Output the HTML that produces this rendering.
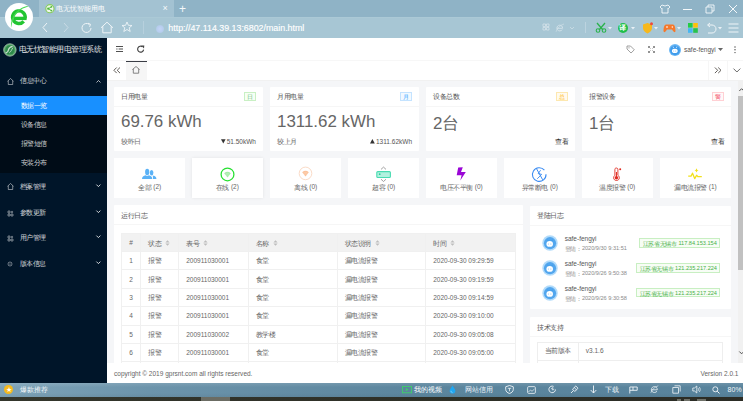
<!DOCTYPE html>
<html><head><meta charset="utf-8">
<style>
*{margin:0;padding:0;box-sizing:border-box}
html,body{width:743px;height:401px;overflow:hidden;background:#fff}
body{font-family:"Liberation Sans",sans-serif;position:relative;color:#666}
.a{position:absolute}
.t{position:absolute;white-space:nowrap;line-height:1}
svg{position:absolute;overflow:visible}
.srt{position:relative;display:inline-block;vertical-align:middle;margin-left:3.4px;top:0.4px}
/* browser chrome */
#tabstrip{left:0;top:0;width:743px;height:17px;background:#8fb3c6}
#tab{left:39px;top:0;width:135px;height:17px;background:#a3c2d2}
#addr{left:0;top:17px;width:743px;height:21px;background:#a7c6d4;border-top:1px solid #abc9d6}
/* sidebar */
#side{left:0;top:38px;width:107px;height:345px;background:#001529}
#sub{left:0;top:95.5px;width:107px;height:77.3px;background:#000c17}
#active{left:0;top:95.5px;width:107px;height:19px;background:#1890ff}
.mt{color:rgba(255,255,255,.8);font-size:6.5px}
/* header */
#header{left:107px;top:38px;width:636px;height:23.3px;background:#fff;border-bottom:1px solid #f7f7f7}
#tabs{left:107px;top:61px;width:636px;height:19.5px;background:#fff;border-bottom:1px solid #f1f1f1}
#content{left:107px;top:80.5px;width:636px;height:283px;background:#f5f6f8}
.card{position:absolute;background:#fff;border-radius:1px}
.ch{position:absolute;left:0;top:0;right:0;height:19.5px;border-bottom:1px solid #f6f6f6}
.ctitle{font-size:6.5px;color:#555}
.badge{position:absolute;font-size:6px;line-height:8.6px;height:9.4px;width:12.6px;border:1px solid;text-align:center}
.big{font-size:16.9px;color:#666}
.tri{position:relative;display:inline-block;vertical-align:baseline;margin-right:1px}
.small{font-size:6.5px;color:#666}
.sc{position:absolute;top:158.3px;height:40px;width:71px;background:#fff}
.sct{position:absolute;left:0;right:0;top:184px;text-align:center;font-size:6.5px;color:#666}
/* table */
table{border-collapse:collapse;position:absolute;left:120.7px;top:232.6px;width:395px;font-size:6.5px;color:#666}
td,th{border:1px solid #f0f0f0;height:18.4px;padding:0 0 0 7px;text-align:left;font-weight:normal;white-space:nowrap}
th{background:#f2f2f2;padding-top:1.6px;height:18.4px}
#footer{left:107px;top:363px;width:636px;height:20px;background:#fff}
#status{left:0;top:383px;width:743px;height:13.5px;background:linear-gradient(180deg,rgba(255,255,255,.12) 0,rgba(255,255,255,0) 30%,rgba(0,0,0,0) 70%,rgba(0,0,0,.05) 100%),linear-gradient(90deg,#7ea3b8 0%,#6c94ab 20%,#5c869e 55%,#58839c 100%)}
#bottom{left:0;top:396.5px;width:743px;height:5px;background:linear-gradient(90deg,#34362c,#2f3128 50%,#2b2c25)}
</style></head><body>

<!-- ===== Browser chrome ===== -->
<div class="a" id="tabstrip"></div>
<div class="a" id="tab"></div>
<div class="a" id="addr"></div>
<!-- logo circle -->
<div class="a" style="left:5px;top:3px;width:28px;height:28px;border-radius:50%;background:#fff"></div>
<svg style="left:0;top:0" width="40" height="40" viewBox="0 0 40 40">
  <path d="M13.2 18.4 H26.6" stroke="#22c532" stroke-width="3.4"></path>
  <path d="M25.1 18.3 A6.3 6.3 0 1 0 23.7 21.3" fill="none" stroke="#22c532" stroke-width="3.4"></path>
  <path d="M12.2 23.5 C12.6 18.5 14.5 14.5 17.8 11.4" fill="none" stroke="#fff" stroke-width="0.5" opacity="0.7"></path>
  <path d="M11 27.8 C10.8 21 12.6 14.8 17.5 10.8 C20.3 8.5 23.5 6.9 27.3 6 C27.9 5.9 28.1 6.4 27.6 6.8 C23.8 7.8 20.5 9.5 17.8 12.2 C14.5 15.5 12.2 21 11 27.8 Z" fill="#3fd84a"></path>
</svg>
<!-- tab favicon -->
<svg style="left:44.5px;top:4.2px" width="10" height="10"><circle cx="4.9" cy="4.7" r="4.1" fill="#eef7ea" stroke="#86cc5c" stroke-width="1.1"></circle><path d="M6.3 2.9 L3.4 4.7 L6.3 6.5" fill="none" stroke="#4fb83a" stroke-width="0.9"></path><circle cx="3.2" cy="4.7" r="1.1" fill="#4fb83a"></circle><circle cx="6.4" cy="2.8" r="0.9" fill="#4fb83a"></circle><circle cx="6.4" cy="6.6" r="0.9" fill="#4fb83a"></circle></svg>
<div class="t" style="left:56.3px;top:5px;font-size:7px;color:#fff"><i style="font-style: normal;"><i style="letter-spacing: 0px; font-style: normal;">电无忧智能用</i>电</i></div>
<div class="t" style="left:162.5px;top:4px;font-size:9px;color:#f4f8fa">×</div>
<div class="t" style="left:179px;top:2.5px;font-size:12px;color:#f4f8fa">+</div>
<!-- nav icons -->
<svg style="left:41px;top:22px" width="8" height="11"><path d="M6 1 L2 5.5 L6 10" fill="none" stroke="#eef4f7" stroke-width="1"></path></svg>
<svg style="left:62px;top:22px" width="8" height="11"><path d="M2 1 L6 5.5 L2 10" fill="none" stroke="#c9dbe5" stroke-width="1"></path></svg>
<svg style="left:81px;top:21.5px" width="12" height="12"><path d="M10 6 A4.5 4.5 0 1 1 8.5 2.6" fill="none" stroke="#eef4f7" stroke-width="1"></path><path d="M7 1.2 L9.5 2.3 L8.6 4.8" fill="none" stroke="#eef4f7" stroke-width="1"></path></svg>
<svg style="left:100px;top:21px" width="14" height="13"><path d="M1 6.8 L7 1.2 L13 6.8 M2.8 5.3 V11.8 H11.2 V5.3" fill="none" stroke="#eef4f7" stroke-width="1"></path></svg>
<svg style="left:121px;top:21px" width="12" height="12"><path d="M6 1 L7.4 4.3 L11 4.5 L8.2 6.8 L9.2 10.5 L6 8.5 L2.8 10.5 L3.8 6.8 L1 4.5 L4.6 4.3 Z" fill="none" stroke="#eef4f7" stroke-width="0.9"></path></svg>
<div class="a" style="left:143px;top:21px;width:1px;height:13px;background:#b7d0dd"></div>
<div class="a" style="left:155.5px;top:24.8px;width:8px;height:8px;border-radius:50%;background:radial-gradient(circle,#c3d4f6 0%,#b7cdee 55%,rgba(170,200,225,0) 100%)"></div>
<div class="t" style="left:168.3px;top:23.8px;font-size:8.85px;color:#fff;-webkit-text-stroke:0.15px #fff">http://47.114.39.13:6802/main.html</div>
<!-- top right window controls -->
<svg style="left:659px;top:4px" width="12" height="10"><path d="M3 1 L1 3 L2.5 4.5 L3 4 V9 H9 V4 L9.5 4.5 L11 3 L9 1 Q6 3 3 1 Z" fill="none" stroke="#f4f8fa" stroke-width="0.9"></path></svg>
<div class="a" style="left:683px;top:8.5px;width:9px;height:1px;background:#f4f8fa"></div>
<svg style="left:705px;top:4px" width="10" height="10"><path d="M1 3 H7 V9 H1 Z M3 3 V1 H9 V7 H7" fill="none" stroke="#f4f8fa" stroke-width="0.9"></path></svg>
<svg style="left:728px;top:4px" width="10" height="10"><path d="M1 1 L9 9 M9 1 L1 9" stroke="#f4f8fa" stroke-width="1"></path></svg>
<!-- address bar right icons -->
<svg style="left:542px;top:23px" width="8" height="8"><path d="M1 1h2.5v2.5H1zM4.5 1H7v2.5H4.5zM1 4.5h2.5V7H1zM4.5 4.5H7V7H4.5z" fill="none" stroke="#d4e2ea" stroke-width="0.8"></path></svg>
<svg style="left:554.5px;top:22.5px" width="10" height="10"><path d="M2.2 5.3 H7.6 C7.6 3.3 6.3 2.2 4.8 2.2 C3 2.2 1.9 3.6 1.9 5.1 C1.9 6.8 3.1 7.9 4.8 7.9 C5.9 7.9 6.8 7.4 7.3 6.6" fill="none" stroke="#d4e2ea" stroke-width="0.9"></path><path d="M1 8.8 C2.3 5 5 2.3 9 1" fill="none" stroke="#d4e2ea" stroke-width="0.6"></path></svg>
<svg style="left:569px;top:26px" width="6" height="4"><path d="M1 1 L3 3 L5 1" fill="none" stroke="#d4e2ea" stroke-width="0.7"></path></svg>
<div class="a" style="left:585px;top:22px;width:1px;height:11px;background:#bcd3df"></div>
<svg style="left:594.5px;top:22px" width="12" height="11"><path d="M2 1 L8 8 M10 1 L4 8" stroke="#2bb24c" stroke-width="1.3"></path><circle cx="3" cy="8.5" r="1.8" fill="none" stroke="#2bb24c" stroke-width="1.1"></circle><circle cx="9" cy="8.5" r="1.8" fill="none" stroke="#2bb24c" stroke-width="1.1"></circle></svg>
<svg style="left:608px;top:26.5px" width="4" height="3"><path d="M0 0 H4 L2 2.5 Z" fill="#e8f0f5"></path></svg>
<div class="a" style="left:617.5px;top:22.5px;width:10px;height:10px;border-radius:50%;background:#1fbf4a"></div>
<div class="t" style="left:619px;top:24.2px;font-size:7px;color:#fff;font-weight:bold"><i style="font-style: normal;">译</i></div>
<svg style="left:631px;top:26.5px" width="4" height="3"><path d="M0 0 H4 L2 2.5 Z" fill="#e8f0f5"></path></svg>
<svg style="left:641.5px;top:22px" width="11" height="12"><path d="M5.5 1 L10 2.5 V6 C10 8.5 8 10.5 5.5 11.5 C3 10.5 1 8.5 1 6 V2.5 Z" fill="#f7b81c"></path><circle cx="9.5" cy="1.8" r="1.5" fill="#ef4a3c"></circle></svg>
<svg style="left:654px;top:26.5px" width="4" height="3"><path d="M0 0 H4 L2 2.5 Z" fill="#e8f0f5"></path></svg>
<svg style="left:663px;top:22.5px" width="13" height="10"><path d="M3 1.5 H10 C12 1.5 12.5 6 12.5 8 C12.5 9.5 11 9.5 10 8 L9 6.5 H4 L3 8 C2 9.5 0.5 9.5 0.5 8 C0.5 6 1 1.5 3 1.5 Z" fill="#f6782a"></path><path d="M3 4 H5 M4 3 V5" stroke="#fff" stroke-width="0.6"></path><circle cx="9.3" cy="4" r="0.7" fill="#fff"></circle></svg>
<svg style="left:677px;top:26.5px" width="4" height="3"><path d="M0 0 H4 L2 2.5 Z" fill="#e8f0f5"></path></svg>
<svg style="left:687.5px;top:22.5px" width="10" height="10"><rect x="0" y="0" width="4.6" height="4.6" fill="#22cc44"></rect><rect x="5.2" y="0" width="4.6" height="4.6" fill="#ffc107"></rect><rect x="0" y="5.2" width="4.6" height="4.6" fill="#45b6f2"></rect><rect x="5.2" y="5.2" width="4.6" height="4.6" fill="#27c24c"></rect></svg>
<svg style="left:705px;top:22px" width="12" height="12"><path d="M3 3 H7 C9.5 3 11 5 11 7 C11 9 9.5 11 7 11 H3" fill="none" stroke="#eef4f7" stroke-width="1"></path><path d="M5 1 L2.5 3 L5 5" fill="none" stroke="#eef4f7" stroke-width="1"></path></svg>
<svg style="left:718px;top:26.5px" width="4" height="3"><path d="M0 0 H4 L2 2.5 Z" fill="#e8f0f5"></path></svg>
<svg style="left:728px;top:22.5px" width="11" height="10"><path d="M0.5 1 H10.5 M0.5 5 H10.5 M0.5 9 H10.5" stroke="#eef4f7" stroke-width="1"></path></svg>

<!-- ===== Sidebar ===== -->
<div class="a" id="side"></div>
<div class="a" id="sub"></div>
<div class="a" id="active"></div>
<svg style="left:0;top:40px" width="20" height="20"><circle cx="9.9" cy="9.95" r="6.2" fill="#58a86c" stroke="#a9c7b2" stroke-width="0.8"></circle><circle cx="9.9" cy="9.95" r="4.6" fill="#2e8b4a"></circle><path d="M12.6 6.3 C10.5 6.8 8.8 8.2 8.6 9.5 C8.4 11 7.2 12.6 5.6 13.2" fill="none" stroke="#c9ddcf" stroke-width="1.3"></path><path d="M12.8 7.8 C11.7 9.5 11.2 11.5 9.3 12.8" fill="none" stroke="#d6e6da" stroke-width="0.8"></path></svg>
<div class="t" style="left:18.5px;top:46.2px;font-size:7.55px;color:#e4e6e8"><i style="font-style: normal;"><i style="letter-spacing: -0.45px; font-style: normal;">电无忧智能用电管理系</i>统</i></div>

<svg style="left:6.5px;top:78px" width="7" height="7"><path d="M0.5 3.3 L3.5 0.5 L6.5 3.3 M1.3 2.7 V6.5 H5.7 V2.7" fill="none" stroke="rgba(255,255,255,.7)" stroke-width="0.7"></path></svg>
<div class="t mt" style="left:20px;top:78.3px"><i style="font-style: normal;"><i style="letter-spacing: -0.5px; font-style: normal;">信息中</i>心</i></div>
<svg style="left:95.5px;top:80px" width="5" height="3"><path d="M0.5 2.5 L2.5 0.5 L4.5 2.5" fill="none" stroke="rgba(255,255,255,.85)" stroke-width="0.8"></path></svg>

<div class="t mt" style="left:20.5px;top:103px;color:#fff"><i style="font-style: normal;"><i style="letter-spacing: -0.5px; font-style: normal;">数据一</i>览</i></div>
<div class="t mt" style="left:20.5px;top:122.3px"><i style="font-style: normal;"><i style="letter-spacing: -0.5px; font-style: normal;">设备信</i>息</i></div>
<div class="t mt" style="left:20.5px;top:140.6px"><i style="font-style: normal;"><i style="letter-spacing: -0.5px; font-style: normal;">报警短</i>信</i></div>
<div class="t mt" style="left:20.5px;top:159.6px"><i style="font-style: normal;"><i style="letter-spacing: -0.5px; font-style: normal;">安装分</i>布</i></div>

<svg style="left:6.5px;top:183.2px" width="7" height="7"><path d="M0.5 3.3 L3.5 0.5 L6.5 3.3 M1.3 2.7 V6.5 H5.7 V2.7" fill="none" stroke="rgba(255,255,255,.7)" stroke-width="0.7"></path></svg>
<div class="t mt" style="left:19.5px;top:183.5px"><i style="font-style: normal;"><i style="letter-spacing: -0.5px; font-style: normal;">档案管</i>理</i></div>
<svg style="left:95.8px;top:184.3px" width="5" height="3.5"><path d="M0.4 0.6 L2.4 2.6 L4.4 0.6" fill="none" stroke="rgba(255,255,255,.9)" stroke-width="0.9"></path></svg>

<svg style="left:6.5px;top:209.6px" width="7" height="7"><path d="M1 1h2v2H1zM1 4h2v2H1zM4 4h2v2H4z M3.9 2 h2.2 M5 0.9 v2.2" fill="none" stroke="rgba(255,255,255,.72)" stroke-width="0.6"></path></svg>
<div class="t mt" style="left:19.5px;top:209.7px"><i style="font-style: normal;"><i style="letter-spacing: -0.5px; font-style: normal;">参数更</i>新</i></div>
<svg style="left:95.8px;top:209.6px" width="5" height="3.5"><path d="M0.4 0.6 L2.4 2.6 L4.4 0.6" fill="none" stroke="rgba(255,255,255,.9)" stroke-width="0.9"></path></svg>

<svg style="left:6.5px;top:235.1px" width="7" height="7"><path d="M1 1h2v2H1zM1 4h2v2H1zM4 4h2v2H4z M3.9 2 h2.2 M5 0.9 v2.2" fill="none" stroke="rgba(255,255,255,.72)" stroke-width="0.6"></path></svg>
<div class="t mt" style="left:19.5px;top:235.2px"><i style="font-style: normal;"><i style="letter-spacing: -0.5px; font-style: normal;">用户管</i>理</i></div>
<svg style="left:95.8px;top:235.2px" width="5" height="3.5"><path d="M0.4 0.6 L2.4 2.6 L4.4 0.6" fill="none" stroke="rgba(255,255,255,.9)" stroke-width="0.9"></path></svg>

<svg style="left:7px;top:260.8px" width="6" height="6"><circle cx="3" cy="3" r="2" fill="none" stroke="rgba(255,255,255,.7)" stroke-width="0.6"></circle><circle cx="3" cy="3" r="0.6" fill="rgba(255,255,255,.7)"></circle></svg>
<div class="t mt" style="left:19.5px;top:260.7px"><i style="font-style: normal;"><i style="letter-spacing: -0.5px; font-style: normal;">版本信</i>息</i></div>
<svg style="left:95.8px;top:260.8px" width="5" height="3.5"><path d="M0.4 0.6 L2.4 2.6 L4.4 0.6" fill="none" stroke="rgba(255,255,255,.9)" stroke-width="0.9"></path></svg>

<!-- ===== Header ===== -->
<div class="a" id="header"></div>
<svg style="left:116px;top:46px" width="8" height="7"><path d="M0 0.5 H7 M2.6 3 H7 M0 5.5 H7" stroke="#505050" stroke-width="1"></path><rect x="0.3" y="2.4" width="1.2" height="1.2" fill="#666"></rect></svg>
<svg style="left:137px;top:45.4px" width="8" height="8"><path d="M6.6 4.6 A3 3 0 1 1 5.5 1.8" fill="none" stroke="#444" stroke-width="1.15"></path><path d="M4.2 0.6 L7.3 0.4 L7 3.4Z" fill="#444"></path></svg>
<svg style="left:625.5px;top:45.3px" width="9" height="8"><path d="M1 1 H4.5 L8.3 4.8 L5 8 L1 4 Z" fill="none" stroke="#888" stroke-width="0.8"></path><circle cx="3" cy="2.8" r="0.6" fill="#888"></circle></svg>
<svg style="left:647.5px;top:45.5px" width="7" height="7"><path d="M0.5 0.5 L2.5 2.5 M0.5 0.5 H2 M0.5 0.5 V2 M6.5 0.5 L4.5 2.5 M6.5 0.5 H5 M6.5 0.5 V2 M0.5 6.5 L2.5 4.5 M0.5 6.5 H2 M0.5 6.5 V5 M6.5 6.5 L4.5 4.5 M6.5 6.5 H5 M6.5 6.5 V5" stroke="#777" stroke-width="0.8"></path></svg>
<svg style="left:667px;top:41.8px" width="16" height="16" viewBox="-8 -8 16 16"><circle r="6" fill="#6db8f4"></circle><circle cy="0.3" r="4.9" fill="#3f9cec"></circle><path d="M-1.9 -3.4 L-1.3 -1.9 M1.9 -3.4 L1.3 -1.9" stroke="#fff" stroke-width="0.6"></path><ellipse cx="-0.2" cy="0.9" rx="2.9" ry="2.1" fill="#fff"></ellipse><circle cx="-1.2" cy="1" r="0.45" fill="#3f9cec"></circle><circle cx="0.8" cy="1" r="0.45" fill="#3f9cec"></circle></svg>
<div class="t" style="left:684px;top:46.9px;font-size:6.5px;color:#555">safe-fengyi</div>
<svg style="left:717.5px;top:48.3px" width="5" height="3"><path d="M0 0 H5 L2.5 3Z" fill="#666"></path></svg>
<svg style="left:733.6px;top:46px" width="2" height="8"><circle cx="1" cy="1" r="0.7" fill="#444"></circle><circle cx="1" cy="3.8" r="0.7" fill="#444"></circle><circle cx="1" cy="6.6" r="0.7" fill="#444"></circle></svg>

<!-- ===== Tabs ===== -->
<div class="a" id="tabs"></div>
<div class="a" style="left:126px;top:61px;width:21px;height:19px;background:#f6f6f6"></div>
<div class="a" style="left:126px;top:61px;width:21px;height:1px;background:#3a3d45"></div>
<svg style="left:112.5px;top:66.5px" width="8" height="7"><path d="M3.7 0.5 L0.9 3.3 L3.7 6.1 M7 0.5 L4.2 3.3 L7 6.1" fill="none" stroke="#5a5550" stroke-width="0.95"></path></svg>
<svg style="left:132.4px;top:65.6px" width="8.5" height="8"><path d="M0.4 3.6 L4 0.5 L7.6 3.6 M1.3 2.9 V7.2 H6.7 V2.9" fill="none" stroke="#707070" stroke-width="0.85" stroke-linejoin="round"></path></svg>
<div class="a" style="left:708px;top:61px;width:1px;height:19px;background:#f6f6f6"></div>
<div class="a" style="left:727px;top:61px;width:1px;height:19px;background:#f6f6f6"></div>
<svg style="left:713.8px;top:66.8px" width="8" height="7"><path d="M0.9 0.5 L3.7 3.3 L0.9 6.1 M4.2 0.5 L7 3.3 L4.2 6.1" fill="none" stroke="#5a5550" stroke-width="0.95"></path></svg>
<svg style="left:732.6px;top:67.6px" width="8" height="5"><path d="M0.5 0.6 L3.9 4 L7.3 0.6" fill="none" stroke="#5a5a5a" stroke-width="0.9"></path></svg>

<!-- ===== Content ===== -->
<div class="a" id="content"></div>

<!-- Row 1 cards -->
<div class="card" style="left:114px;top:87.3px;width:149px;height:63.5px">
  <div class="ch"></div>
  <div class="t ctitle" style="left:7px;top:6.9px"><i style="font-style: normal;"><i style="letter-spacing: -0.5px; font-style: normal;">日用电</i>量</i></div>
  <div class="badge" style="right:6.8px;top:4.3px;color:#5fb878;border-color:#c9f0c4;background:#f6fff4"><i style="font-style: normal;">日</i></div>
  <div class="t big" style="left:7px;top:27.1px">69.76 kWh</div>
  <div class="t small" style="left:7px;top:51.8px"><i style="font-style: normal;"><i style="letter-spacing: -0.5px; font-style: normal;">较昨</i>日</i></div>
  <div class="t small" style="right:7px;top:51.3px;color:#555"><svg class="tri" width="4.6" height="4.6" viewBox="0 0 4.6 4.6"><path d="M0 0.2 H4.6 L2.3 4.6Z" fill="#333"></path></svg>51.50kWh</div>
</div>
<div class="card" style="left:270px;top:87.3px;width:149px;height:63.5px">
  <div class="ch"></div>
  <div class="t ctitle" style="left:7px;top:6.9px"><i style="font-style: normal;"><i style="letter-spacing: -0.5px; font-style: normal;">月用电</i>量</i></div>
  <div class="badge" style="right:6.8px;top:4.3px;color:#1e9fff;border-color:#c4e3ff;background:#f2f9ff"><i style="font-style: normal;">月</i></div>
  <div class="t big" style="left:7px;top:27.1px">1311.62 kWh</div>
  <div class="t small" style="left:7px;top:51.8px"><i style="font-style: normal;"><i style="letter-spacing: -0.5px; font-style: normal;">较上</i>月</i></div>
  <div class="t small" style="right:7px;top:51.3px;color:#555"><svg class="tri" width="4.8" height="4.6" viewBox="0 0 4.8 4.6"><path d="M0 4.6 H4.8 L2.4 0Z" fill="#333"></path></svg>1311.62kWh</div>
</div>
<div class="card" style="left:426px;top:87.3px;width:149px;height:63.5px">
  <div class="ch"></div>
  <div class="t ctitle" style="left:7px;top:6.9px"><i style="font-style: normal;"><i style="letter-spacing: -0.5px; font-style: normal;">设备总</i>数</i></div>
  <div class="badge" style="right:6.8px;top:4.3px;color:#ffb800;border-color:#fde8b0;background:#fffaef"><i style="font-style: normal;">总</i></div>
  <div class="t big" style="left:7px;top:28.4px">2<i style="font-style: normal;">台</i></div>
  <div class="t small" style="right:6.5px;top:51.5px;color:#333"><i style="font-style: normal;"><i style="letter-spacing: -0.5px; font-style: normal;">查</i>看</i></div>
</div>
<div class="card" style="left:582px;top:87.3px;width:149px;height:63.5px">
  <div class="ch"></div>
  <div class="t ctitle" style="left:7px;top:6.9px"><i style="font-style: normal;"><i style="letter-spacing: -0.5px; font-style: normal;">报警设</i>备</i></div>
  <div class="badge" style="right:6.8px;top:4.3px;color:#f2405a;border-color:#ffd0d4;background:#fff8f8"><i style="font-style: normal;">警</i></div>
  <div class="t big" style="left:7px;top:28.4px">1<i style="font-style: normal;">台</i></div>
  <div class="t small" style="right:6.5px;top:51.5px;color:#333"><i style="font-style: normal;"><i style="letter-spacing: -0.5px; font-style: normal;">查</i>看</i></div>
</div>

<!-- Row 2 status cards -->
<div class="sc" style="left:114px"></div>
<div class="sc" style="left:192px;box-shadow:0 0 3px rgba(0,0,0,.08)"></div>
<div class="sc" style="left:270px"></div>
<div class="sc" style="left:348px"></div>
<div class="sc" style="left:426px"></div>
<div class="sc" style="left:504px"></div>
<div class="sc" style="left:582px"></div>
<div class="sc" style="left:660px"></div>
<div class="t" style="left:138px;top:183.9px;font-size:6.5px"><i style="font-style: normal; position: relative; top: 0.97px;"><i style="letter-spacing: -0.5px; font-style: normal;">全</i>部</i> (2)</div>
<div class="t" style="left:215.6px;top:183.9px;font-size:6.5px"><i style="font-style: normal; position: relative; top: 0.97px;"><i style="letter-spacing: -0.5px; font-style: normal;">在</i>线</i> (2)</div>
<div class="t" style="left:294px;top:183.9px;font-size:6.5px"><i style="font-style: normal; position: relative; top: 0.97px;"><i style="letter-spacing: -0.5px; font-style: normal;">离</i>线</i> (0)</div>
<div class="t" style="left:372px;top:183.9px;font-size:6.5px"><i style="font-style: normal; position: relative; top: 0.97px;"><i style="letter-spacing: -0.5px; font-style: normal;">超</i>容</i> (0)</div>
<div class="t" style="left:440px;top:183.9px;font-size:6.5px"><i style="font-style: normal; position: relative; top: 0.97px;"><i style="letter-spacing: -0.5px; font-style: normal;">电压不平</i>衡</i> (0)</div>
<div class="t" style="left:521.6px;top:183.9px;font-size:6.5px"><i style="font-style: normal; position: relative; top: 0.97px;"><i style="letter-spacing: -0.5px; font-style: normal;">异常断</i>电</i> (0)</div>
<div class="t" style="left:599px;top:183.9px;font-size:6.5px"><i style="font-style: normal; position: relative; top: 0.97px;"><i style="letter-spacing: -0.5px; font-style: normal;">温度报</i>警</i> (0)</div>
<div class="t" style="left:674px;top:183.9px;font-size:6.5px"><i style="font-style: normal; position: relative; top: 0.97px;"><i style="letter-spacing: -0.5px; font-style: normal;">漏电流报</i>警</i> (1)</div>
<!-- icons -->
<svg style="left:134px;top:162px" width="30" height="20"><ellipse cx="13.2" cy="9.9" rx="2.1" ry="3.2" fill="#5bb2f6"></ellipse><path d="M8 16.9 C8 14.6 9.5 13.6 11.6 13.2 Q13.2 14.2 14.8 13.2 C16.9 13.6 18.3 14.6 18.3 16.9 Z" fill="#5bb2f6"></path><ellipse cx="17.6" cy="10.7" rx="1.8" ry="2.7" fill="#5bb2f6"></ellipse><path d="M18.7 13.6 Q19.3 13.9 20 13.7 C21.5 14.2 22.4 15.2 22.4 16.9 H19 C19 15.6 18.9 14.5 18.7 13.6 Z" fill="#5bb2f6"></path></svg>
<svg style="left:220px;top:167px" width="15" height="15"><circle cx="7.5" cy="7.4" r="6.4" fill="none" stroke="#25e030" stroke-width="1.25"></circle><path d="M7.5 10.4 L4.2 6.2 A5 5 0 0 1 10.8 6.2 Z" fill="#a6eca8"></path><path d="M5.3 7.3 A3.3 3.3 0 0 1 9.7 7.3 M6.2 8.4 A2 2 0 0 1 8.8 8.4" fill="none" stroke="#d4f6d5" stroke-width="0.4"></path></svg>
<svg style="left:297.5px;top:166.2px" width="15" height="15"><circle cx="7.5" cy="7.4" r="6.3" fill="none" stroke="#fbdcc8" stroke-width="1"></circle><path d="M7.5 10.4 L4.2 6.2 A5 5 0 0 1 10.8 6.2 Z" fill="#fcc29a"></path><path d="M5.3 7.3 A3.3 3.3 0 0 1 9.7 7.3 M6.2 8.4 A2 2 0 0 1 8.8 8.4" fill="none" stroke="#fde3d0" stroke-width="0.4"></path></svg>
<svg style="left:368px;top:164px" width="30" height="20"><path d="M13 5.4 L15.5 3.1 L18 5.4 M13 15.2 L15.5 17.5 L18 15.2" fill="none" stroke="#8a8a8a" stroke-width="0.8"></path><rect x="8.8" y="7.6" width="13.6" height="5.9" rx="1" fill="#b2f1df" stroke="#49dbb1" stroke-width="1.1"></rect><circle cx="11.7" cy="10.2" r="0.9" fill="#2bcf98"></circle></svg>
<svg style="left:448px;top:164px" width="30" height="20"><path d="M10.2 3.6 L14.8 3.2 L13 8 L17.8 8 L12.3 16.6 L13.6 11.2 L8.7 11.2 Z" fill="#9a06d6"></path></svg>
<svg style="left:525px;top:164px" width="30" height="20"><path d="M19.4 6.2 A6.8 6.8 0 1 0 21 10.2" fill="none" stroke="#3b8cf2" stroke-width="1.1"></path><path d="M11.3 4.3 L17.7 15.8" stroke="#3b8cf2" stroke-width="1"></path><path d="M15.6 6.2 L13.2 9.6 L16.7 10.4 L12.2 14.8" fill="none" stroke="#3b8cf2" stroke-width="0.9"></path></svg>
<svg style="left:613px;top:167px" width="9" height="14"><path d="M3.3 1 C4.4 1 4.9 1.6 4.9 2.6 V8.3 C6 9 6.3 10 6.3 10.8 C6.3 12.5 5 13.5 3.5 13.5 C1.8 13.5 0.6 12.3 0.6 10.8 C0.6 9.8 1.1 9 1.9 8.3 V2.6 C1.9 1.6 2.3 1 3.3 1Z" fill="none" stroke="#e02a20" stroke-width="0.9"></path><circle cx="3.45" cy="10.8" r="1.7" fill="#e02a20"></circle><path d="M3.45 5 V10" stroke="#e02a20" stroke-width="1"></path><circle cx="7.2" cy="2.2" r="1" fill="#e02a20"></circle></svg>
<svg style="left:680px;top:164px" width="30" height="20"><path d="M8.2 12.2 H11 L12.5 9.2 L14.7 14.6 L16.6 11.2 L17.8 12.7 H21.8" fill="none" stroke="#f2e11a" stroke-width="1.3" stroke-linejoin="round"></path><path d="M16.5 4.3 L17.3 5.9 L18.5 6.4 L17.3 6.9 L16.5 8.6 L15.7 6.9 L14.5 6.4 L15.7 5.9 Z" fill="#f2e11a"></path></svg>

<!-- Table card -->
<div class="card" style="left:114px;top:205.4px;width:408.5px;height:160px">
  <div class="ch" style="height:20px"></div>
  <div class="t ctitle" style="left:7px;top:7.6px"><i style="font-style: normal;"><i style="letter-spacing: -0.5px; font-style: normal;">运行日</i>志</i></div>
</div>
<table>
<tbody><tr><th style="width:19.6px;padding:0;text-align:center">#</th><th style="width:37.9px"><i style="font-style: normal; position: relative; top: 0.97px;"><i style="letter-spacing: -0.5px; font-style: normal;">状</i>态</i><svg class="srt" width="5" height="6" viewBox="0 0 5 6"><path d="M2.5 0.2 L4.6 2.6 H0.4Z M2.5 5.8 L4.6 3.4 H0.4Z" fill="#bdbdbd"></path></svg></th><th style="width:69.6px"><i style="font-style: normal; position: relative; top: 0.97px;"><i style="letter-spacing: -0.5px; font-style: normal;">表</i>号</i><svg class="srt" width="5" height="6" viewBox="0 0 5 6"><path d="M2.5 0.2 L4.6 2.6 H0.4Z M2.5 5.8 L4.6 3.4 H0.4Z" fill="#bdbdbd"></path></svg></th><th style="width:88.9px"><i style="font-style: normal; position: relative; top: 0.97px;"><i style="letter-spacing: -0.5px; font-style: normal;">名</i>称</i><svg class="srt" width="5" height="6" viewBox="0 0 5 6"><path d="M2.5 0.2 L4.6 2.6 H0.4Z M2.5 5.8 L4.6 3.4 H0.4Z" fill="#bdbdbd"></path></svg></th><th style="width:88.6px"><i style="font-style: normal; position: relative; top: 0.97px;"><i style="letter-spacing: -0.5px; font-style: normal;">状态说</i>明</i><svg class="srt" width="5" height="6" viewBox="0 0 5 6"><path d="M2.5 0.2 L4.6 2.6 H0.4Z M2.5 5.8 L4.6 3.4 H0.4Z" fill="#bdbdbd"></path></svg></th><th><i style="font-style: normal; position: relative; top: 0.97px;"><i style="letter-spacing: -0.5px; font-style: normal;">时</i>间</i><svg class="srt" width="5" height="6" viewBox="0 0 5 6"><path d="M2.5 0.2 L4.6 2.6 H0.4Z M2.5 5.8 L4.6 3.4 H0.4Z" fill="#bdbdbd"></path></svg></th></tr>
<tr><td style="padding:0;text-align:center">1</td><td><i style="font-style: normal; position: relative; top: 0.97px;"><i style="letter-spacing: -0.5px; font-style: normal;">报</i>警</i></td><td>200911030001</td><td><i style="font-style: normal; position: relative; top: 0.97px;"><i style="letter-spacing: -0.5px; font-style: normal;">食</i>堂</i></td><td><i style="font-style: normal; position: relative; top: 0.97px;"><i style="letter-spacing: -0.5px; font-style: normal;">漏电流报</i>警</i></td><td>2020-09-30 09:29:59</td></tr>
<tr><td style="padding:0;text-align:center">2</td><td><i style="font-style: normal; position: relative; top: 0.97px;"><i style="letter-spacing: -0.5px; font-style: normal;">报</i>警</i></td><td>200911030001</td><td><i style="font-style: normal; position: relative; top: 0.97px;"><i style="letter-spacing: -0.5px; font-style: normal;">食</i>堂</i></td><td><i style="font-style: normal; position: relative; top: 0.97px;"><i style="letter-spacing: -0.5px; font-style: normal;">漏电流报</i>警</i></td><td>2020-09-30 09:19:59</td></tr>
<tr><td style="padding:0;text-align:center">3</td><td><i style="font-style: normal; position: relative; top: 0.97px;"><i style="letter-spacing: -0.5px; font-style: normal;">报</i>警</i></td><td>200911030001</td><td><i style="font-style: normal; position: relative; top: 0.97px;"><i style="letter-spacing: -0.5px; font-style: normal;">食</i>堂</i></td><td><i style="font-style: normal; position: relative; top: 0.97px;"><i style="letter-spacing: -0.5px; font-style: normal;">漏电流报</i>警</i></td><td>2020-09-30 09:14:59</td></tr>
<tr><td style="padding:0;text-align:center">4</td><td><i style="font-style: normal; position: relative; top: 0.97px;"><i style="letter-spacing: -0.5px; font-style: normal;">报</i>警</i></td><td>200911030001</td><td><i style="font-style: normal; position: relative; top: 0.97px;"><i style="letter-spacing: -0.5px; font-style: normal;">食</i>堂</i></td><td><i style="font-style: normal; position: relative; top: 0.97px;"><i style="letter-spacing: -0.5px; font-style: normal;">漏电流报</i>警</i></td><td>2020-09-30 09:10:00</td></tr>
<tr><td style="padding:0;text-align:center">5</td><td><i style="font-style: normal; position: relative; top: 0.97px;"><i style="letter-spacing: -0.5px; font-style: normal;">报</i>警</i></td><td>200911030002</td><td><i style="font-style: normal; position: relative; top: 0.97px;"><i style="letter-spacing: -0.5px; font-style: normal;">教学</i>楼</i></td><td><i style="font-style: normal; position: relative; top: 0.97px;"><i style="letter-spacing: -0.5px; font-style: normal;">漏电流报</i>警</i></td><td>2020-09-30 09:05:08</td></tr>
<tr><td style="padding:0;text-align:center">6</td><td><i style="font-style: normal; position: relative; top: 0.97px;"><i style="letter-spacing: -0.5px; font-style: normal;">报</i>警</i></td><td>200911030001</td><td><i style="font-style: normal; position: relative; top: 0.97px;"><i style="letter-spacing: -0.5px; font-style: normal;">食</i>堂</i></td><td><i style="font-style: normal; position: relative; top: 0.97px;"><i style="letter-spacing: -0.5px; font-style: normal;">漏电流报</i>警</i></td><td>2020-09-30 09:05:00</td></tr>
<tr><td style="padding:0;text-align:center">7</td><td><i style="font-style: normal; position: relative; top: 0.97px;"><i style="letter-spacing: -0.5px; font-style: normal;">报</i>警</i></td><td>200911030001</td><td><i style="font-style: normal; position: relative; top: 0.97px;"><i style="letter-spacing: -0.5px; font-style: normal;">食</i>堂</i></td><td><i style="font-style: normal; position: relative; top: 0.97px;"><i style="letter-spacing: -0.5px; font-style: normal;">漏电流报</i>警</i></td><td>2020-09-30 09:00:00</td></tr>
</tbody></table>

<!-- Login log card -->
<div class="card" style="left:529.5px;top:205.5px;width:201px;height:103.8px">
  <div class="ch" style="height:20.4px"></div>
  <div class="t ctitle" style="left:7.5px;top:7px"><i style="font-style: normal;"><i style="letter-spacing: -0.5px; font-style: normal;">登陆日</i>志</i></div>
</div>
<!-- login items -->
<svg style="left:541.75px;top:234.7px" width="16" height="16" viewBox="-8 -8 16 16"><circle r="7.75" fill="#b2dbfa"></circle><circle cy="0.2" r="6.1" fill="#52a6ee"></circle><path d="M-2.3 -3.2 L-1.6 -1.6 M2.3 -3.2 L1.6 -1.6" stroke="#3a9ae8" stroke-width="0.9"></path><ellipse cx="-0.3" cy="0.9" rx="3.3" ry="2.9" fill="#fff"></ellipse><circle cx="-1.6" cy="1" r="0.5" fill="#7bbcf2"></circle><circle cx="0.9" cy="1" r="0.5" fill="#7bbcf2"></circle></svg>
<svg style="left:541.75px;top:260px" width="16" height="16" viewBox="-8 -8 16 16"><circle r="7.75" fill="#b2dbfa"></circle><circle cy="0.2" r="6.1" fill="#52a6ee"></circle><path d="M-2.3 -3.2 L-1.6 -1.6 M2.3 -3.2 L1.6 -1.6" stroke="#3a9ae8" stroke-width="0.9"></path><ellipse cx="-0.3" cy="0.9" rx="3.3" ry="2.9" fill="#fff"></ellipse><circle cx="-1.6" cy="1" r="0.5" fill="#7bbcf2"></circle><circle cx="0.9" cy="1" r="0.5" fill="#7bbcf2"></circle></svg>
<svg style="left:541.75px;top:284.8px" width="16" height="16" viewBox="-8 -8 16 16"><circle r="7.75" fill="#b2dbfa"></circle><circle cy="0.2" r="6.1" fill="#52a6ee"></circle><path d="M-2.3 -3.2 L-1.6 -1.6 M2.3 -3.2 L1.6 -1.6" stroke="#3a9ae8" stroke-width="0.9"></path><ellipse cx="-0.3" cy="0.9" rx="3.3" ry="2.9" fill="#fff"></ellipse><circle cx="-1.6" cy="1" r="0.5" fill="#7bbcf2"></circle><circle cx="0.9" cy="1" r="0.5" fill="#7bbcf2"></circle></svg>
<div class="t" style="left:564.7px;top:235.9px;font-size:6.5px;color:#555">safe-fengyi</div>
<div class="t" style="left:564.7px;top:245.9px;font-size:5.59px;color:#8a8a8a"><i style="font-style: normal; position: relative; top: 0.84px;"><i style="letter-spacing: -0.41px; font-style: normal;">登陆</i>：</i>2020/9/30 9:31:51</div>
<div class="t" style="left:564.7px;top:261.1px;font-size:6.5px;color:#555">safe-fengyi</div>
<div class="t" style="left:564.7px;top:271.1px;font-size:5.59px;color:#8a8a8a"><i style="font-style: normal; position: relative; top: 0.84px;"><i style="letter-spacing: -0.41px; font-style: normal;">登陆</i>：</i>2020/9/26 9:50:38</div>
<div class="t" style="left:564.7px;top:285.9px;color:#555;font-size:6.5px">safe-fengyi</div>
<div class="t" style="left:564.7px;top:295.9px;font-size:5.59px;color:#8a8a8a"><i style="font-style: normal; position: relative; top: 0.84px;"><i style="letter-spacing: -0.41px; font-style: normal;">登陆</i>：</i>2020/9/26 9:30:58</div>
<div class="t" style="left:639.4px;top:238px;height:9.7px;line-height:8.9px;width:80.9px;text-align:center;font-size:5.59px;color:#45b045;border:1px solid #c8efc2;background:#f7fdf5"><i style="font-style: normal; position: relative; top: 0.84px;"><i style="letter-spacing: -0.41px; font-style: normal;">江苏省无锡</i>市</i> 117.84.153.154</div>
<div class="t" style="left:636.4px;top:262.9px;height:9.7px;line-height:8.9px;width:83.8px;text-align:center;font-size:5.59px;color:#45b045;border:1px solid #c8efc2;background:#f7fdf5"><i style="font-style: normal; position: relative; top: 0.84px;"><i style="letter-spacing: -0.41px; font-style: normal;">江苏省无锡</i>市</i> 121.235.217.224</div>
<div class="t" style="left:636.4px;top:287.8px;height:9.7px;line-height:8.9px;width:83.8px;text-align:center;font-size:5.59px;color:#45b045;border:1px solid #c8efc2;background:#f7fdf5"><i style="font-style: normal; position: relative; top: 0.84px;"><i style="letter-spacing: -0.41px; font-style: normal;">江苏省无锡</i>市</i> 121.235.217.224</div>

<!-- Tech support card -->
<div class="card" style="left:529.5px;top:317.4px;width:201px;height:50px">
  <div class="ch" style="height:19.5px"></div>
  <div class="t ctitle" style="left:7.5px;top:7.2px"><i style="font-style: normal;"><i style="letter-spacing: -0.5px; font-style: normal;">技术支</i>持</i></div>
  <div class="a" style="left:7.3px;top:24.8px;width:186.5px;height:30px;border:1px solid #eee"></div>
  <div class="a" style="left:7.3px;top:42.6px;width:186.5px;height:1px;background:#eee"></div>
  <div class="a" style="left:48.8px;top:24.8px;width:1px;height:30px;background:#eee"></div>
  <div class="t" style="left:15px;top:31px;font-size:6.5px;color:#666"><i style="font-style: normal;"><i style="letter-spacing: -0.5px; font-style: normal;">当前版</i>本</i></div>
  <div class="t" style="left:56.3px;top:31px;font-size:6.5px;color:#666">v3.1.6</div>
</div>

<!-- scrollbar -->
<div class="a" style="left:738px;top:80.5px;width:5px;height:282.5px;background:#f1f1f1"></div>
<div class="a" style="left:738px;top:96px;width:5px;height:174px;background:#c1c1c1"></div>
<svg style="left:738.5px;top:88px" width="5" height="3.5"><path d="M0.3 3 L2.6 0.7 L4.9 3" fill="none" stroke="#505050" stroke-width="1"></path></svg>
<svg style="left:738.5px;top:351px" width="5" height="3.5"><path d="M0.3 0.5 L2.6 2.8 L4.9 0.5" fill="none" stroke="#505050" stroke-width="1"></path></svg>

<!-- footer -->
<div class="a" id="footer"></div>
<div class="t" style="left:114px;top:370.9px;font-size:6.52px;color:#666">copyright © 2019 gprsnt.com all rights reserved.</div>
<div class="t" style="right:4.5px;top:370.8px;font-size:6.52px;color:#666">Version 2.0.1</div>

<!-- ===== status bar ===== -->
<div class="a" id="status"></div>
<div class="a" id="bottom"></div>
<div class="a" style="left:4px;top:385px;width:9px;height:9px;border-radius:50%;background:#f5b91d"></div>
<div class="t" style="left:5.7px;top:385.8px;font-size:7px;color:#fff">★</div>
<div class="t" style="left:20px;top:385.6px;font-size:7px;color:#f4f7f9"><i style="font-style: normal;"><i style="letter-spacing: 0px; font-style: normal;">爆款推</i>荐</i></div>
<div class="a" style="left:201px;top:396.5px;width:29px;height:5px;background:#6b6c63"></div>
<svg style="left:402px;top:385.8px" width="10" height="7"><rect x="0.5" y="0.5" width="9" height="6.3" fill="none" stroke="#3fd06a" stroke-width="0.9"></rect><path d="M3.8 2 L6.5 3.6 L3.8 5.2Z" fill="#3fd06a"></path></svg>
<div class="t" style="left:413.9px;top:385.7px;font-size:7px;color:#fff"><i style="font-style: normal;"><i style="letter-spacing: 0px; font-style: normal;">我的视</i>频</i></div>
<svg style="left:449px;top:384.6px" width="7" height="9"><path d="M3.5 0.4 C4.6 2.5 6.4 4.2 6.4 6 C6.4 7.7 5.1 8.6 3.5 8.6 C1.9 8.6 0.6 7.7 0.6 6 C0.6 4.2 2.4 2.5 3.5 0.4Z" fill="#1ea7f2"></path><path d="M2 5.8 C2 7 2.7 7.5 3.5 7.6" fill="none" stroke="#bfe6fb" stroke-width="0.6"></path></svg>
<div class="t" style="left:464.5px;top:386.2px;font-size:7px;color:#e8f0f5"><i style="font-style: normal;"><i style="letter-spacing: 0px; font-style: normal;">网站信</i>用</i></div>
<svg style="left:504.5px;top:385.3px" width="9" height="9"><path d="M4.5 0.5 L8.3 1.8 V4.3 C8.3 6.5 6.6 7.8 4.5 8.5 C2.4 7.8 0.7 6.5 0.7 4.3 V1.8Z" fill="none" stroke="#f0f5f8" stroke-width="0.9"></path><path d="M2.8 3.3 H6.2 M4.5 3.3 V6.3" stroke="#f0f5f8" stroke-width="0.8"></path></svg>
<svg style="left:527px;top:385.5px" width="9" height="8"><rect x="0.6" y="0.6" width="7.8" height="6.8" rx="1.2" fill="none" stroke="#f0f5f8" stroke-width="0.8"></rect><path d="M1.5 6 L3.5 4 L5 5.3 L7.5 3" fill="none" stroke="#f0f5f8" stroke-width="0.7"></path></svg>
<svg style="left:548px;top:385.3px" width="9" height="9"><path d="M7.5 4.5 A3.3 3.3 0 1 1 5.6 1.4" fill="none" stroke="#f0f5f8" stroke-width="0.9"></path><path d="M3 4 L5 2.5 L4.5 5 L6.3 4.3" fill="none" stroke="#f0f5f8" stroke-width="0.7"></path></svg>
<svg style="left:569.5px;top:385.3px" width="9" height="9"><path d="M1 8 L3.5 5.5 M2.5 4.2 L5.8 1 L8 3.2 L4.8 6.5Z M4.2 2.5 L6.5 4.8" fill="none" stroke="#f0f5f8" stroke-width="0.9"></path></svg>
<svg style="left:590px;top:385.3px" width="7" height="9"><path d="M3.5 0.5 V8 M0.7 5 L3.5 8 L6.3 5" fill="none" stroke="#f0f5f8" stroke-width="0.9"></path></svg>
<div class="t" style="left:604.6px;top:385.7px;font-size:7px;color:#f0f5f8"><i style="font-style: normal;"><i style="letter-spacing: 0px; font-style: normal;">下</i>载</i></div>
<svg style="left:629px;top:385.5px" width="9" height="8"><path d="M0.8 7.5 V1 H8.2 V4.3 H0.8 M4 1 V4.3" fill="none" stroke="#f0f5f8" stroke-width="0.9"></path></svg>
<svg style="left:650px;top:385.3px" width="9" height="9"><path d="M1.5 4.8 H7.3 C7.3 2.8 6 1.6 4.4 1.6 C2.6 1.6 1.4 3 1.4 4.6 C1.4 6.4 2.7 7.5 4.4 7.5 C5.6 7.5 6.5 7 7 6.2" fill="none" stroke="#f0f5f8" stroke-width="0.8"></path><path d="M0.8 7.8 C2 4.5 4.5 2 8.3 0.8" fill="none" stroke="#f0f5f8" stroke-width="0.6"></path></svg>
<svg style="left:671.5px;top:385.3px" width="9" height="9"><path d="M2.5 0.8 H8.2 V6.5 M0.8 2.5 H6.5 V8.2 H0.8Z" fill="none" stroke="#f0f5f8" stroke-width="0.8"></path></svg>
<svg style="left:692px;top:385.3px" width="9" height="9"><path d="M0.8 3 H2.5 L4.8 1 V8 L2.5 6 H0.8Z" fill="none" stroke="#f0f5f8" stroke-width="0.8"></path><path d="M6 3 C6.7 3.8 6.7 5.2 6 6 M7.3 2 C8.5 3.3 8.5 5.7 7.3 7" fill="none" stroke="#f0f5f8" stroke-width="0.7"></path></svg>
<svg style="left:711.5px;top:385.5px" width="8" height="8"><circle cx="3.3" cy="3.3" r="2.5" fill="none" stroke="#f0f5f8" stroke-width="0.9"></circle><path d="M5.2 5.2 L7.5 7.5" stroke="#f0f5f8" stroke-width="1"></path></svg>
<div class="t" style="left:727.6px;top:386px;font-size:7px;color:#f0f5f8">80%</div>
<div class="a" style="left:677px;top:398.5px;width:4px;height:2.5px;background:#6e7068"></div>
<div class="a" style="left:684px;top:398.5px;width:6px;height:2.5px;background:#6e7068"></div>
<div class="a" style="left:697px;top:398.5px;width:9px;height:2.5px;background:#6e7068"></div>

</body></html>
